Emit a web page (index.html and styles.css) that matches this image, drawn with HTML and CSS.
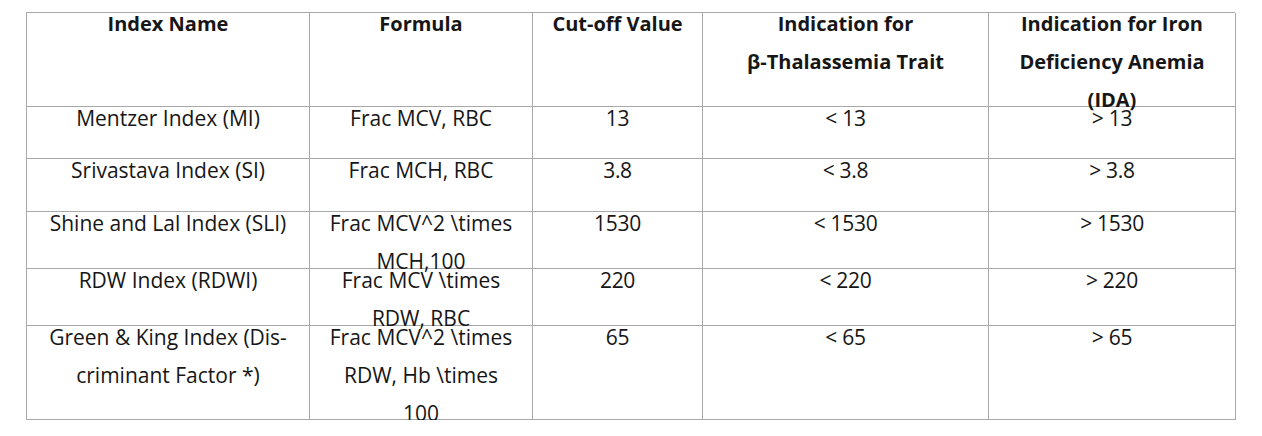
FILE: index.html
```html
<!DOCTYPE html>
<html lang="en">
<head>
<meta charset="utf-8">
<title>Discriminant indices</title>
<link rel="stylesheet" href="styles.css">
</head>
<body>
<div class="tbl">
  <div class="c h"><div class="t">Index Name</div></div>
  <div class="c h"><div class="t">Formula</div></div>
  <div class="c h"><div class="t">Cut-off Value</div></div>
  <div class="c h"><div class="t">Indication for<br>β-Thalassemia Trait</div></div>
  <div class="c h"><div class="t">Indication for Iron<br>Deficiency Anemia<br>(IDA)</div></div>

  <div class="c"><div class="t">Mentzer Index (MI)</div></div>
  <div class="c"><div class="t">Frac MCV, RBC</div></div>
  <div class="c n"><div class="t">13</div></div>
  <div class="c n"><div class="t">&lt; 13</div></div>
  <div class="c n"><div class="t">&gt; 13</div></div>

  <div class="c"><div class="t">Srivastava Index (SI)</div></div>
  <div class="c"><div class="t">Frac MCH, RBC</div></div>
  <div class="c n"><div class="t">3.8</div></div>
  <div class="c n"><div class="t">&lt; 3.8</div></div>
  <div class="c n"><div class="t">&gt; 3.8</div></div>

  <div class="c"><div class="t">Shine and Lal Index (SLI)</div></div>
  <div class="c"><div class="t">Frac MCV^2 \times<br>MCH,100</div></div>
  <div class="c n"><div class="t">1530</div></div>
  <div class="c n"><div class="t">&lt; 1530</div></div>
  <div class="c n"><div class="t">&gt; 1530</div></div>

  <div class="c"><div class="t">RDW Index (RDWI)</div></div>
  <div class="c"><div class="t">Frac MCV \times<br>RDW, RBC</div></div>
  <div class="c n"><div class="t">220</div></div>
  <div class="c n"><div class="t">&lt; 220</div></div>
  <div class="c n"><div class="t">&gt; 220</div></div>

  <div class="c"><div class="t">Green &amp; King Index (Dis-<br>criminant Factor *)</div></div>
  <div class="c"><div class="t">Frac MCV^2 \times<br>RDW, Hb \times<br>100</div></div>
  <div class="c n"><div class="t">65</div></div>
  <div class="c n"><div class="t">&lt; 65</div></div>
  <div class="c n"><div class="t">&gt; 65</div></div>
</div>
</body>
</html>
```

FILE: styles.css
```css
body {
  margin: 0;
  background: #ffffff;
  font-family: "Open Sans", "Noto Sans", sans-serif;
  color: #161616;
}
.tbl {
  display: grid;
  grid-template-columns: 283px 223px 170px 286px 247px;
  grid-template-rows: 94px 52px 53px 57px 57px 94px;
  width: 1209px;
  margin: 12px 0 0 26px;
  border-top: 1px solid #a8a8a8;
  border-left: 1px solid #a8a8a8;
  box-sizing: border-box;
}
.c {
  border-right: 1px solid #a8a8a8;
  border-bottom: 1px solid #a8a8a8;
  text-align: center;
  font-size: 21px;
  min-width: 0;
  white-space: nowrap;
}
.t {
  line-height: 38px;
  margin-top: -8px;
}
.h {
  font-size: 20px;
  font-weight: 700;
}
.n {
  letter-spacing: -0.3px;
}
```
